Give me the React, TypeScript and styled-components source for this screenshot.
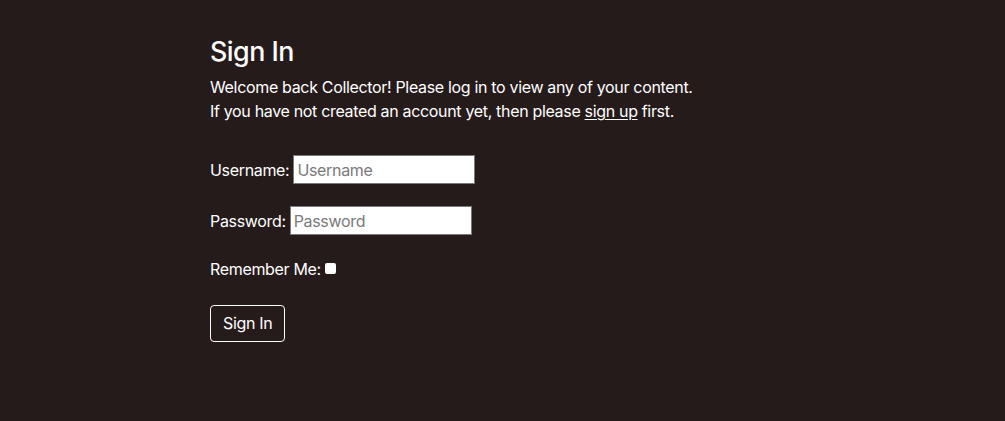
import { FC } from "react";
import styled, { createGlobalStyle } from "styled-components";

const GlobalStyle = createGlobalStyle`
  html, body {
    margin: 0;
    padding: 0;
    background: #261b1b;
  }
  body {
    font-family: Inter, "Noto Sans", "Liberation Sans", sans-serif;
    color: #fff;
    font-size: 16px;
    line-height: 1.5;
    letter-spacing: -0.33px;
    min-height: 421px;
  }
`;

const StyledPage = styled.main`
  padding: 35px 0 0 210px;
`;

const StyledTitle = styled.h3`
  margin: 0 0 8px;
  font-size: 26.8px;
  font-weight: 500;
  line-height: 1.2;
  letter-spacing: -0.5px;
`;

const StyledIntro = styled.p`
  margin: 0 0 32px;
`;

const StyledLink = styled.a`
  color: inherit;
  text-decoration: underline;
  text-underline-offset: 2px;
`;

const StyledForm = styled.form`
  display: flex;
  flex-direction: column;
  align-items: flex-start;
  gap: 22px;
`;

const StyledRow = styled.div`
  display: flex;
  align-items: center;
  min-height: 24px;
`;

const StyledLabel = styled.label`
  margin-right: 4px;
`;

const StyledInput = styled.input`
  box-sizing: border-box;
  width: 182px;
  height: 29px;
  padding: 1px 3px;
  border: 1px solid #7a7a7a;
  border-radius: 0;
  background: #fff;
  color: #222;
  font: inherit;
  font-size: 16px;
  letter-spacing: -0.33px;

  &::placeholder {
    color: #7b7b7b;
  }
`;

const StyledCheckbox = styled.input`
  appearance: none;
  width: 11px;
  height: 11px;
  margin: 0 0 1px 0;
  border-radius: 2px;
  background: #fff;
`;

const StyledButton = styled.button`
  margin-top: 2px;
  padding: 6px 12px;
  border: 1px solid #fff;
  border-radius: 4px;
  background: transparent;
  color: #fff;
  font: inherit;
  letter-spacing: inherit;
  line-height: 23px;
  cursor: pointer;
`;

const SignIn: FC = () => {
  return (
    <StyledPage>
      <StyledTitle>Sign In</StyledTitle>
      <StyledIntro>
        Welcome back Collector! Please log in to view any of your content.
        <br />
        If you have not created an account yet, then please{" "}
        <StyledLink href="#">sign up</StyledLink> first.
      </StyledIntro>
      <StyledForm onSubmit={(e) => e.preventDefault()}>
        <StyledRow>
          <StyledLabel htmlFor="username">Username:</StyledLabel>
          <StyledInput id="username" type="text" placeholder="Username" />
        </StyledRow>
        <StyledRow>
          <StyledLabel htmlFor="password">Password:</StyledLabel>
          <StyledInput id="password" type="password" placeholder="Password" />
        </StyledRow>
        <StyledRow>
          <StyledLabel htmlFor="remember">Remember Me:</StyledLabel>
          <StyledCheckbox id="remember" type="checkbox" />
        </StyledRow>
        <StyledButton type="submit">Sign In</StyledButton>
      </StyledForm>
    </StyledPage>
  );
};

export default function App() {
  return (
    <>
      <GlobalStyle />
      <SignIn />
    </>
  );
}
